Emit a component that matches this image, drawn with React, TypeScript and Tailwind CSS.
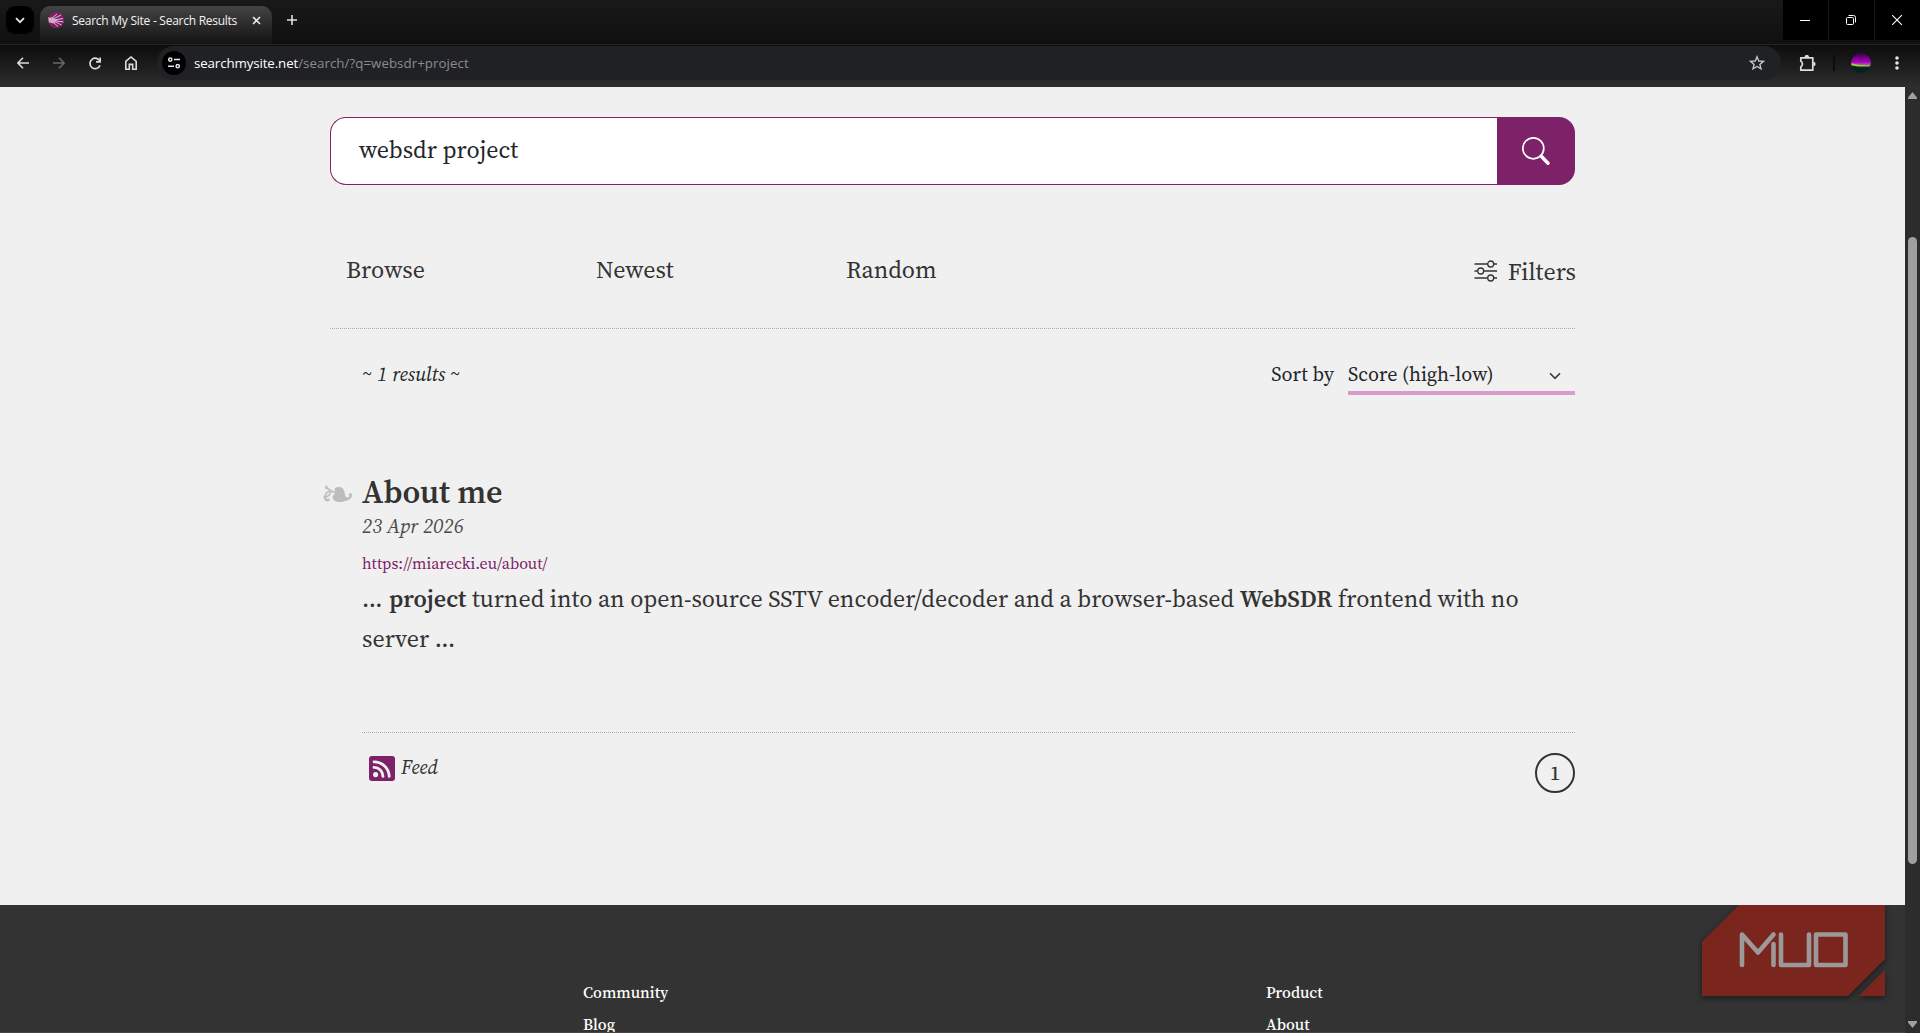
import React from "react";

/**
 * Search results page inside a dark browser window.
 * - TabStrip + Toolbar: browser chrome
 * - Results: search box, navigation, result list, pagination
 * - SiteFooter: link columns
 */

const navItems = ["Browse", "Newest", "Random"];

const footerColumns = [
  { title: "Community", links: ["Blog"], className: "w-[683px]" },
  { title: "Product", links: ["About"], className: "" },
];

const TabStrip: React.FC = () => (
  <div className="flex h-[45px] shrink-0 items-start border-b border-[#242424] bg-gradient-to-b from-[#191919] to-[#101010]">
    <button className="ml-1.5 mt-1.5 flex h-7 w-7 items-center justify-center rounded-[9px] bg-black">
      <svg width="10" height="7" viewBox="0 0 10 7" fill="none">
        <path d="M1 1.2l4 4 4-4" stroke="#e6e6e6" strokeWidth="1.8" />
      </svg>
    </button>
    <div className="ml-1.5 mt-1.5 flex h-[38px] w-[232px] items-center rounded-t-[10px] bg-gradient-to-b from-[#444] to-[#141414] pb-2.5 pl-2">
      <svg width="16" height="16" viewBox="0 0 16 16" className="shrink-0">
        <circle cx="8" cy="8" r="8" fill="#7d2168" />
        <g stroke="#f0c9e4" strokeWidth="0.9" fill="none">
          <path d="M4 6l5-4M5 7l8-4M6 8l9-1.5M6 8.5l9.5 1.5M6 9l7.500 4M5 10l5 4.500" />
        </g>
        <path d="M0 5.5l5 0 4 3-3 3-5-1z" fill="#d3a9c6" />
      </svg>
      <span className="ml-2 w-[168px] shrink-0 whitespace-nowrap pt-px font-['Open_Sans'] text-[12px] font-medium tracking-[-0.26px] text-[#f2f2f2]">
        Search My Site - Search Results
      </span>
      <svg width="9" height="9" viewBox="0 0 9 9" className="ml-3">
        <path d="M1 1l7 7M8 1L1 8" stroke="#e6e6e6" strokeWidth="1.6" />
      </svg>
    </div>
    <div className="mt-1.5 flex h-7 w-10 items-center justify-center">
      <svg width="10" height="10" viewBox="0 0 10 10">
        <path d="M5 0v10M0 5h10" stroke="#e0e0e0" strokeWidth="1.6" />
      </svg>
    </div>
    <div className="ml-auto flex h-10 gap-px bg-[#151515]">
      <div className="flex w-[45px] items-center justify-center bg-black pr-px">
        <span className="h-px w-2.5 bg-white" />
      </div>
      <div className="flex w-[45px] items-center justify-center bg-black pr-px">
        <svg width="10" height="10" viewBox="0 0 10 10" fill="none" stroke="#fff">
          <rect x="0.5" y="2.5" width="7" height="7" rx="1" />
          <path d="M2.5 0.5h5a2 2 0 0 1 2 2v5" />
        </svg>
      </div>
      <div className="flex w-[45px] items-center justify-center bg-black pr-px">
        <svg width="10" height="10" viewBox="0 0 10 10">
          <path d="M0 0l10 10M10 0L0 10" stroke="#fff" strokeWidth="1.1" />
        </svg>
      </div>
    </div>
  </div>
);

const Toolbar: React.FC = () => (
  <div className="flex h-[42px] shrink-0 items-start bg-gradient-to-b from-[#0d0d0d] to-[#2e2e2e] pt-px">
    <div className="flex h-[34px] w-[157px] items-center gap-6 pl-[17px] text-[#dcdcdc]">
      <svg width="12" height="12" viewBox="0 0 12 12" fill="none" stroke="currentColor" strokeWidth="1.6" className="shrink-0">
        <path d="M12 6H1M6 0.8L0.9 6 6 11.2" />
      </svg>
      <svg width="12" height="12" viewBox="0 0 12 12" fill="none" stroke="#686868" strokeWidth="1.6" className="shrink-0">
        <path d="M0 6h11M6 0.8L11.1 6 6 11.2" />
      </svg>
      <svg width="12" height="13" viewBox="0 0 12 13" fill="none" stroke="currentColor" strokeWidth="1.7" className="shrink-0">
        <path d="M11 4.5A5.2 5.2 0 1 0 11 8.4" />
        <path d="M11.2 0.5v4.3H7" />
      </svg>
      <svg width="12" height="14" viewBox="0 0 12 14" fill="none" stroke="currentColor" strokeWidth="1.6" className="shrink-0">
        <path d="M0.8 13.2V5.4L6 1l5.2 4.4v7.8H7.7V8.4H4.3v4.8z" />
      </svg>
    </div>
    <div className="flex h-[34px] w-[1624px] items-center rounded-full bg-[#202125] pl-[5px] pr-4">
      <div className="flex h-6 w-6 items-center justify-center rounded-full bg-black">
        <svg width="12" height="12" viewBox="0 0 12 12" fill="none" stroke="#e8e8e8" strokeWidth="1.5">
          <circle cx="2.3" cy="2.6" r="1.6" />
          <path d="M6 2.6h6M0 9.2h6" />
          <circle cx="9.7" cy="9.2" r="1.6" />
        </svg>
      </div>
      <span className="ml-2 pt-px font-['Open_Sans'] text-[13.3px] tracking-[0.05px] text-[#8b8c8f]">
        <span className="tracking-[-0.11px] text-white">searchmysite.net</span>/search/?q=websdr+project
      </span>
      <svg width="16" height="16" viewBox="0 0 16 16" fill="none" stroke="#c4c5c7" strokeWidth="1.4" className="ml-auto">
        <path d="M8 1.8l1.8 4.2 4.6.4-3.5 3 1.1 4.5L8 11.5l-4 2.4 1.1-4.5-3.5-3 4.6-.4z" />
      </svg>
    </div>
    <div className="flex h-[34px] items-center pl-[18px]">
      <svg width="17" height="17" viewBox="0 0 17 17" fill="none" stroke="#dedede" strokeWidth="1.7">
        <path d="M1.8 2.8h12v12.400h-12v-3.400c2.200-.6 2.200-5 0-5.600z" strokeLinejoin="round" />
        <path d="M5.5 2.200a2.300 2.300 0 0 1 4.600 0zM14.400 6.800a2.200 2.200 0 0 1 0 4.400z" fill="#dedede" stroke="none" />
      </svg>
      <span className="ml-[17px] h-4 w-0.5 bg-[#0c0c0c]" />
      <svg width="20" height="20" viewBox="0 0 20 20" className="ml-4">
        <defs>
          <linearGradient id="aurora" x1="0" y1="0" x2="0" y2="1">
            <stop offset="0" stopColor="#350045" />
            <stop offset="0.45" stopColor="#a800ba" />
            <stop offset="0.6" stopColor="#c255c6" />
            <stop offset="0.68" stopColor="#092521" />
            <stop offset="1" stopColor="#052019" />
          </linearGradient>
        </defs>
        <circle cx="10" cy="10" r="10" fill="url(#aurora)" />
        <path d="M0.5 11c4 1.5 6 2 10 1.8s5 .3 8 0" fill="none" stroke="#8de21e" strokeWidth="1.4" />
      </svg>
      <svg width="4" height="14" viewBox="0 0 4 14" fill="#e4e4e4" className="ml-6">
        <circle cx="2" cy="2" r="1.8" />
        <circle cx="2" cy="7" r="1.8" />
        <circle cx="2" cy="12" r="1.8" />
      </svg>
    </div>
  </div>
);

const SearchBox: React.FC = () => (
  <div className="flex h-[68px]">
    <div className="flex-1 rounded-l-2xl border border-r-0 border-[#7d2168] bg-white pl-7 text-[24px] leading-[63px] text-[#212529]">
      websdr project
    </div>
    <button className="flex w-[78px] items-center justify-center rounded-r-2xl bg-[#7d2168]">
      <svg width="28" height="28" viewBox="0 0 28 28" fill="none" stroke="#fff">
        <circle cx="11.3" cy="11.3" r="10.5" strokeWidth="1.7" />
        <path d="M19.3 19.3l6.7 6.9" strokeWidth="3.4" strokeLinecap="round" />
      </svg>
    </button>
  </div>
);

const Results: React.FC = () => (
  <main className="h-[818px] shrink-0 bg-[#f0f0f0] pl-[330px] pt-[30px] text-[#333]">
    <div className="w-[1245px]">
      <SearchBox />

      {/* Navigation */}
      <div className="flex h-[144px] border-b border-dotted border-[#adadad] pl-4 pt-[67px] text-[24px] leading-9">
        {navItems.map((label) => (
          <div key={label} className="w-[250px]">
            {label}
          </div>
        ))}
        <div className="ml-auto flex h-9 items-center pt-1">
          <svg width="24" height="22" viewBox="0 0 24 22" fill="none" stroke="#333" strokeWidth="1.3" className="mb-[3px]">
            <path d="M0.5 4h13.2M19.8 4H23M0.5 11h3.2M9.8 11H23M0.5 18h13.2M19.8 18H23" />
            <circle cx="16.7" cy="4" r="3" />
            <circle cx="6.7" cy="11" r="3" />
            <circle cx="16.7" cy="18" r="3" />
          </svg>
          <span className="-mr-px ml-2.5 pb-px">Filters</span>
        </div>
      </div>

      <div className="flex h-[66px] items-start pl-8 pt-[31px] text-[20px] leading-7 text-[#212529]">
        <span className="italic">~ 1 results ~</span>
        <span className="ml-auto">Sort by</span>
        <div className="ml-3.5 flex h-[35px] w-[227px] items-start justify-between border-b-4 border-[#d99bcb] pr-[14px]">
          <span>Score (high-low)</span>
          <svg width="12" height="8" viewBox="0 0 12 8" fill="none" className="mt-3">
            <path d="M1 1.3l5 5 5-5" stroke="#343a40" strokeWidth="1.6" />
          </svg>
        </div>
      </div>

      {/* Result */}
      <article className="relative h-[337px] pl-8 pt-[77px]">
        <span className="absolute left-[-10px] top-[78px] font-['DejaVu_Sans'] text-[42px] leading-[44px] text-[#bcbcbc]">
          ❧
        </span>
        <h2 className="h-10 text-[32px] font-semibold leading-10">About me</h2>
        <p className="h-7 text-[20px] italic leading-7 text-[#4a4a4a]">23 Apr 2026</p>
        <p className="mt-[9px] h-7 text-[16px] leading-7 text-[#7d2168]">https://miarecki.eu/about/</p>
        <p className="mt-0.5 whitespace-nowrap text-[24px] leading-10">
          <span className="tracking-[0.4px]">... </span>
          <b className="font-semibold">project</b> turned into an open-source SSTV encoder/decoder and a
          browser-based <b className="font-semibold">WebSDR</b> frontend with no
          <br />
          server <span className="tracking-[0.4px]">...</span>
        </p>
      </article>

      <div className="ml-8 flex items-start justify-between border-t border-dotted border-[#adadad] pt-5">
        <div className="flex items-start pl-[7px] pt-[3px]">
          <svg width="26" height="26" viewBox="0 0 26 26" fill="none">
            <rect width="26" height="25" rx="3" fill="#7d2168" />
            <circle cx="6.6" cy="18.6" r="2.6" fill="#f0f0f0" />
            <path d="M5 11.4a9 9 0 0 1 9 9M5 5.8a15 15 0 0 1 15.2 14.6" stroke="#f0f0f0" strokeWidth="2.8" strokeLinecap="round" />
          </svg>
          <span className="ml-1.5 text-[20px] italic leading-[22px]">Feed</span>
        </div>
        <span className="flex h-10 w-10 items-center justify-center rounded-full border-2 border-[#333] text-[20px] font-medium leading-none">
          1
        </span>
      </div>
    </div>
  </main>
);

const SiteFooter: React.FC = () => (
  <footer className="relative flex min-h-0 flex-1 overflow-hidden border-b border-[#484545] bg-[#333] pl-[583px] pt-[71px] text-[16px] font-medium leading-8 text-white">
    {footerColumns.map(({ title, links, className }) => (
      <div key={title} className={className}>
        <div>{title}</div>
        {links.map((l) => (
          <div key={l}>{l}</div>
        ))}
      </div>
    ))}
    <div className="absolute right-5 top-0 drop-shadow-[0_2px_3px_rgba(0,0,0,0.5)]">
      <svg width="183" height="91" viewBox="0 0 183 91">
        <path d="M37 0h146v54l-37 37H0V37z" fill="#7b251f" />
        <path d="M183 64.5V91h-26.5z" fill="#7b251f" />
        <g fill="none" stroke="#9b9999" strokeWidth="4.6" strokeLinejoin="round" strokeLinecap="round">
          <path d="M40 60V29.5L56 47.5 71.5 29.5M71.5 39v21" />
          <path d="M79 29.5V60h28V29.5" />
          <rect x="114" y="29.5" width="29.5" height="30.5" />
        </g>
      </svg>
    </div>
  </footer>
);

const Scrollbar: React.FC = () => (
  <div className="flex w-[15px] flex-col items-center bg-[#2c2c2c] pb-[5px] pt-[5px]">
    <svg width="9" height="7" viewBox="0 0 9 7">
      <path d="M4.5 0L9 5.5V7H0V5.5z" fill="#9f9f9f" />
    </svg>
    <div className="mt-[138px] h-[627px] w-[9px] rounded-full bg-[#9f9f9f]" />
    <svg width="9" height="7" viewBox="0 0 9 7" className="mt-auto">
      <path d="M4.5 7L9 1.5V0H0v1.5z" fill="#9f9f9f" />
    </svg>
  </div>
);

const App: React.FC = () => {
  return (
    <div className="flex h-[1033px] w-[1920px] flex-col overflow-hidden font-['Source_Serif_4','Noto_Serif_CJK_SC','Liberation_Serif',serif]">
      <TabStrip />
      <Toolbar />
      <div className="flex min-h-0 flex-1">
        <div className="flex flex-1 flex-col">
          <Results />
          <SiteFooter />
        </div>
        <Scrollbar />
      </div>
    </div>
  );
};

export default App;
